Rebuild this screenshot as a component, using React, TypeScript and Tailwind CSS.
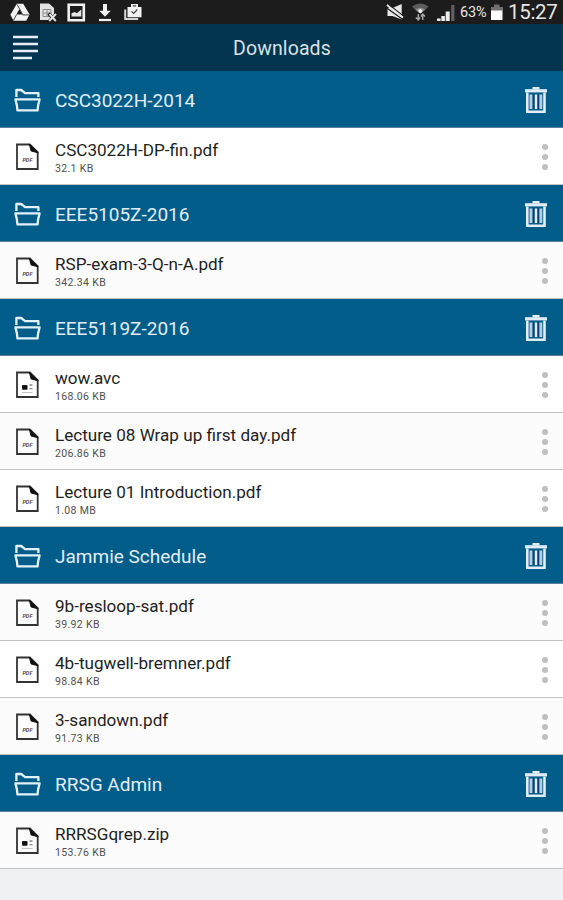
import React from "react";

type FileKind = "pdf" | "doc";
type FileItem = { name: string; size: string; kind: FileKind; shaded?: boolean };
type Folder = { title: string; files: FileItem[] };

const folders: Folder[] = [
  {
    title: "CSC3022H-2014",
    files: [{ name: "CSC3022H-DP-fin.pdf", size: "32.1 KB", kind: "pdf" }],
  },
  {
    title: "EEE5105Z-2016",
    files: [{ name: "RSP-exam-3-Q-n-A.pdf", size: "342.34 KB", kind: "pdf", shaded: true }],
  },
  {
    title: "EEE5119Z-2016",
    files: [
      { name: "wow.avc", size: "168.06 KB", kind: "doc" },
      { name: "Lecture 08 Wrap up first day.pdf", size: "206.86 KB", kind: "pdf", shaded: true },
      { name: "Lecture 01 Introduction.pdf", size: "1.08 MB", kind: "pdf" },
    ],
  },
  {
    title: "Jammie Schedule",
    files: [
      { name: "9b-resloop-sat.pdf", size: "39.92 KB", kind: "pdf", shaded: true },
      { name: "4b-tugwell-bremner.pdf", size: "98.84 KB", kind: "pdf" },
      { name: "3-sandown.pdf", size: "91.73 KB", kind: "pdf", shaded: true },
    ],
  },
  {
    title: "RRSG Admin",
    files: [{ name: "RRRSGqrep.zip", size: "153.76 KB", kind: "doc", shaded: true }],
  },
];

function FolderIcon() {
  return (
    <svg width="28" height="26" viewBox="0 0 28 26" fill="none" stroke="#e4f0fa" strokeWidth="2.3" strokeLinejoin="round">
      <path d="M3.4 11V4h4.8l3.9 3.2h13.3V11" />
      <path d="M2.4 13.4h24.2l-1.5 6-.5 4.9H4.4l-.5-4.9z" />
    </svg>
  );
}

function TrashIcon() {
  return (
    <svg width="24" height="30" viewBox="0 0 24 30" fill="none" stroke="#e2eef7">
      <path d="M8.5 3.2h7" strokeWidth="2.4" />
      <path d="M1 5.8h22" strokeWidth="3.2" />
      <path d="M3.3 7.5v19.3h17.2V7.5" strokeWidth="2.6" />
      <path d="M7 9.5v14.5M16.8 9.5v14.5" stroke="#b5cfe0" strokeWidth="3" />
      <path d="M9.6 9.5v14.5M14.3 9.5v14.5" stroke="#0e3b7c" strokeWidth="1.6" />
      <path d="M12 9.5v14.5" strokeWidth="2.4" />
    </svg>
  );
}

function FileIcon({ kind }: { kind: FileKind }) {
  return (
    <svg width="24" height="28" viewBox="0 0 24 28" fill="none">
      <path d="M2 1.5h12.8l7.9 7.6v16.9H2z" stroke="#333" strokeWidth="1.8" />
      <path d="M14.3 1l8.8 8.8-7-1.8z" fill="#111" stroke="#111" strokeWidth="1" />
      {kind === "pdf" ? (
        <text x="12.4" y="18.6" textAnchor="middle" fontSize="5.6" fontWeight="500" fontStyle="italic" fill="#333">
          PDF
        </text>
      ) : (
        <>
          <rect x="7" y="14" width="5.5" height="4.8" rx="1" fill="#111" />
          <path d="M14.5 14h3M14.5 17.6h3" stroke="#888" strokeWidth="1.3" />
          <path d="M7 21.5h10.5" stroke="#c2c2c2" />
        </>
      )}
    </svg>
  );
}

function StatusBar() {
  return (
    <div className="flex h-6 shrink-0 items-center bg-[#1c1c1c] text-[#e6e6e6]">
      <svg width="150" height="24" viewBox="0 0 150 24" fill="none">
        {/* drive */}
        <path d="M16.8 3.8h6.4l6.4 10.7-3.4 6.3H13.6l-3.2-6z" fill="#f2f2f2" />
        <path d="M19.3 9.2l3.2 5.2h-6.1z" fill="#1c1c1c" />
        <path d="M17 4.4l5.8 10.2M22.5 14.9h6.6M16.6 14.6l-3.2 5.8" stroke="#1c1c1c" strokeWidth=".8" />
        {/* sheet */}
        <path d="M40 3.5h9l5 4.5V20H40z" fill="#e4e4e4" />
        <path d="M43 9.5h8v7h-8zM43 13h8M47 9.5v7" stroke="#8a8a8a" />
        <path d="M48.5 13.5l8 8M57 13.5l-8 8" stroke="#1c1c1c" strokeWidth="3.2" />
        <path d="M49.5 14l6.3 7M56 14l-6.8 7" stroke="#e4e4e4" strokeWidth="1.9" />
        {/* picture */}
        <path d="M68.7 4.7h15.1v15.6H68.7z" stroke="#f2f2f2" strokeWidth="2.6" />
        <path d="M71.5 16.5v-3.3l3.2-1.2 2.2 1.2 4.4-3.7v7z" fill="#e6e6e6" />
        {/* download */}
        <path d="M103 4h4v6.8h3.7L105 16.8l-5.7-6h3.7z" fill="#f2f2f2" />
        <path d="M99 20h12" stroke="#f2f2f2" strokeWidth="2.2" />
        {/* briefcase */}
        <path d="M127.5 7h3.5V4h7v3h3.5v10.2h-14z" fill="#f2f2f2" />
        <path d="M125.2 9.5v9.6h13" stroke="#d6d6d6" strokeWidth="2" />
        <path d="M131.5 11.3l2.2 2.2 3.6-4M132.8 5.8h3.4" stroke="#444" strokeWidth="1.2" />
      </svg>
      <div className="flex-1" />
      <svg width="72" height="24" viewBox="0 0 72 24" fill="none" className="shrink-0">
        {/* muted speaker */}
        <path d="M2.5 8h5l9.2-4v15.5L7.5 16h-5z" fill="#e8e8e8" />
        <path d="M1 7.5l16.5 11.8" stroke="#1c1c1c" strokeWidth="1.2" />
        <path d="M2 5l16 12.6" stroke="#e8e8e8" strokeWidth="1.9" />
        <path d="M4 4.6l14 11" stroke="#1c1c1c" strokeWidth="1.1" />
        {/* wifi */}
        <path d="M27 6.5q8.3-6 16.6 0L38 12h-5.6z" fill="#5c5c5c" />
        <path d="M30.5 9.3q4.8-3.3 9.6 0l-4.8 4.4z" fill="#8d8d8d" />
        <circle cx="35.3" cy="10.9" r="2" fill="#f1f1f1" />
        <path d="M33.3 14v5.5M30.9 17.5l2.4 2.4 1.8-2.4M37.7 20v-5.6M35.8 16.6l2-2.4 2.2 2.4" stroke="#a4a4a4" strokeWidth="1.5" />
        {/* signal */}
        <path d="M52 21v-2.5h3.6V21zM56.3 21v-5h3.6v5zM60.7 21V11.5h4V21z" fill="#ededed" />
        <path d="M66.2 21V5h3.2v16z" fill="#606060" />
      </svg>
      <span className="ml-[3px] w-[29px] whitespace-nowrap pt-[2px] text-[14.5px] leading-6 tracking-[-0.2px]">63%</span>
      <svg width="14" height="24" viewBox="0 0 14 24" className="ml-px shrink-0">
        <path d="M4 4.5h5.5V7H13v4H1V7h3z" fill="#707070" />
        <path d="M1 10.5h11.5V20H1z" fill="#fff" />
      </svg>
      <span className="ml-[4px] w-[55px] whitespace-nowrap text-[20.5px] leading-6 tracking-[-0.3px]">15:27</span>
    </div>
  );
}

function FolderHeader({ title }: { title: string }) {
  return (
    <div className="flex h-[57px] items-center border-b border-[#56839f] bg-[#005d89] pr-[15px] pl-[13px]">
      <FolderIcon />
      <h2 className="ml-[14px] flex-1 pt-1 text-[19px] leading-6 text-[#e2edf6]">{title}</h2>
      <div className="pt-[2px]">
        <TrashIcon />
      </div>
    </div>
  );
}

function FileRow({ file }: { file: FileItem }) {
  return (
    <div className={`flex h-[57px] items-center border-b border-[#c3c3c3] pr-[15px] pl-[15px] ${file.shaded ? "bg-[#fbfbfb]" : "bg-white"}`}>
      <div className="pt-[2px]">
        <FileIcon kind={file.kind} />
      </div>
      <div className="ml-[16px] flex-1 pt-[3px]">
        <p className="text-[17.1px] leading-5 text-[#1e1e1e]">{file.name}</p>
        <p className="mt-[2px] text-[10.5px] leading-[14px] tracking-[0.35px] text-[#505050]">{file.size}</p>
      </div>
      <div className="flex flex-col gap-1 pt-[2px]">
        <span className="size-1.5 rounded-full bg-[#bfbfbf]" />
        <span className="size-1.5 rounded-full bg-[#bfbfbf]" />
        <span className="size-1.5 rounded-full bg-[#bfbfbf]" />
      </div>
    </div>
  );
}

export default function App() {
  return (
    <div className="flex h-[900px] w-[563px] flex-col overflow-hidden bg-[#eef2f4] font-['Roboto',sans-serif]">
      <StatusBar />
      <header className="flex h-12 shrink-0 items-center bg-[#00344f] px-[13px]">
        <svg width="25" height="26" viewBox="0 0 25 26" stroke="#e9eef6" strokeWidth="2.6">
          <path d="M0 2h25M0 9h25M0 16h25M0 23h19" />
        </svg>
        <h1 className="flex-1 pt-[2px] pr-[24px] text-center text-[19.5px] leading-6 tracking-[0.1px] text-[#d9e2e8]">Downloads</h1>
      </header>
      <main className="-mt-px">
        {folders.map((folder) => (
          <section key={folder.title}>
            <FolderHeader title={folder.title} />
            {folder.files.map((file) => (
              <FileRow key={file.name} file={file} />
            ))}
          </section>
        ))}
      </main>
    </div>
  );
}
